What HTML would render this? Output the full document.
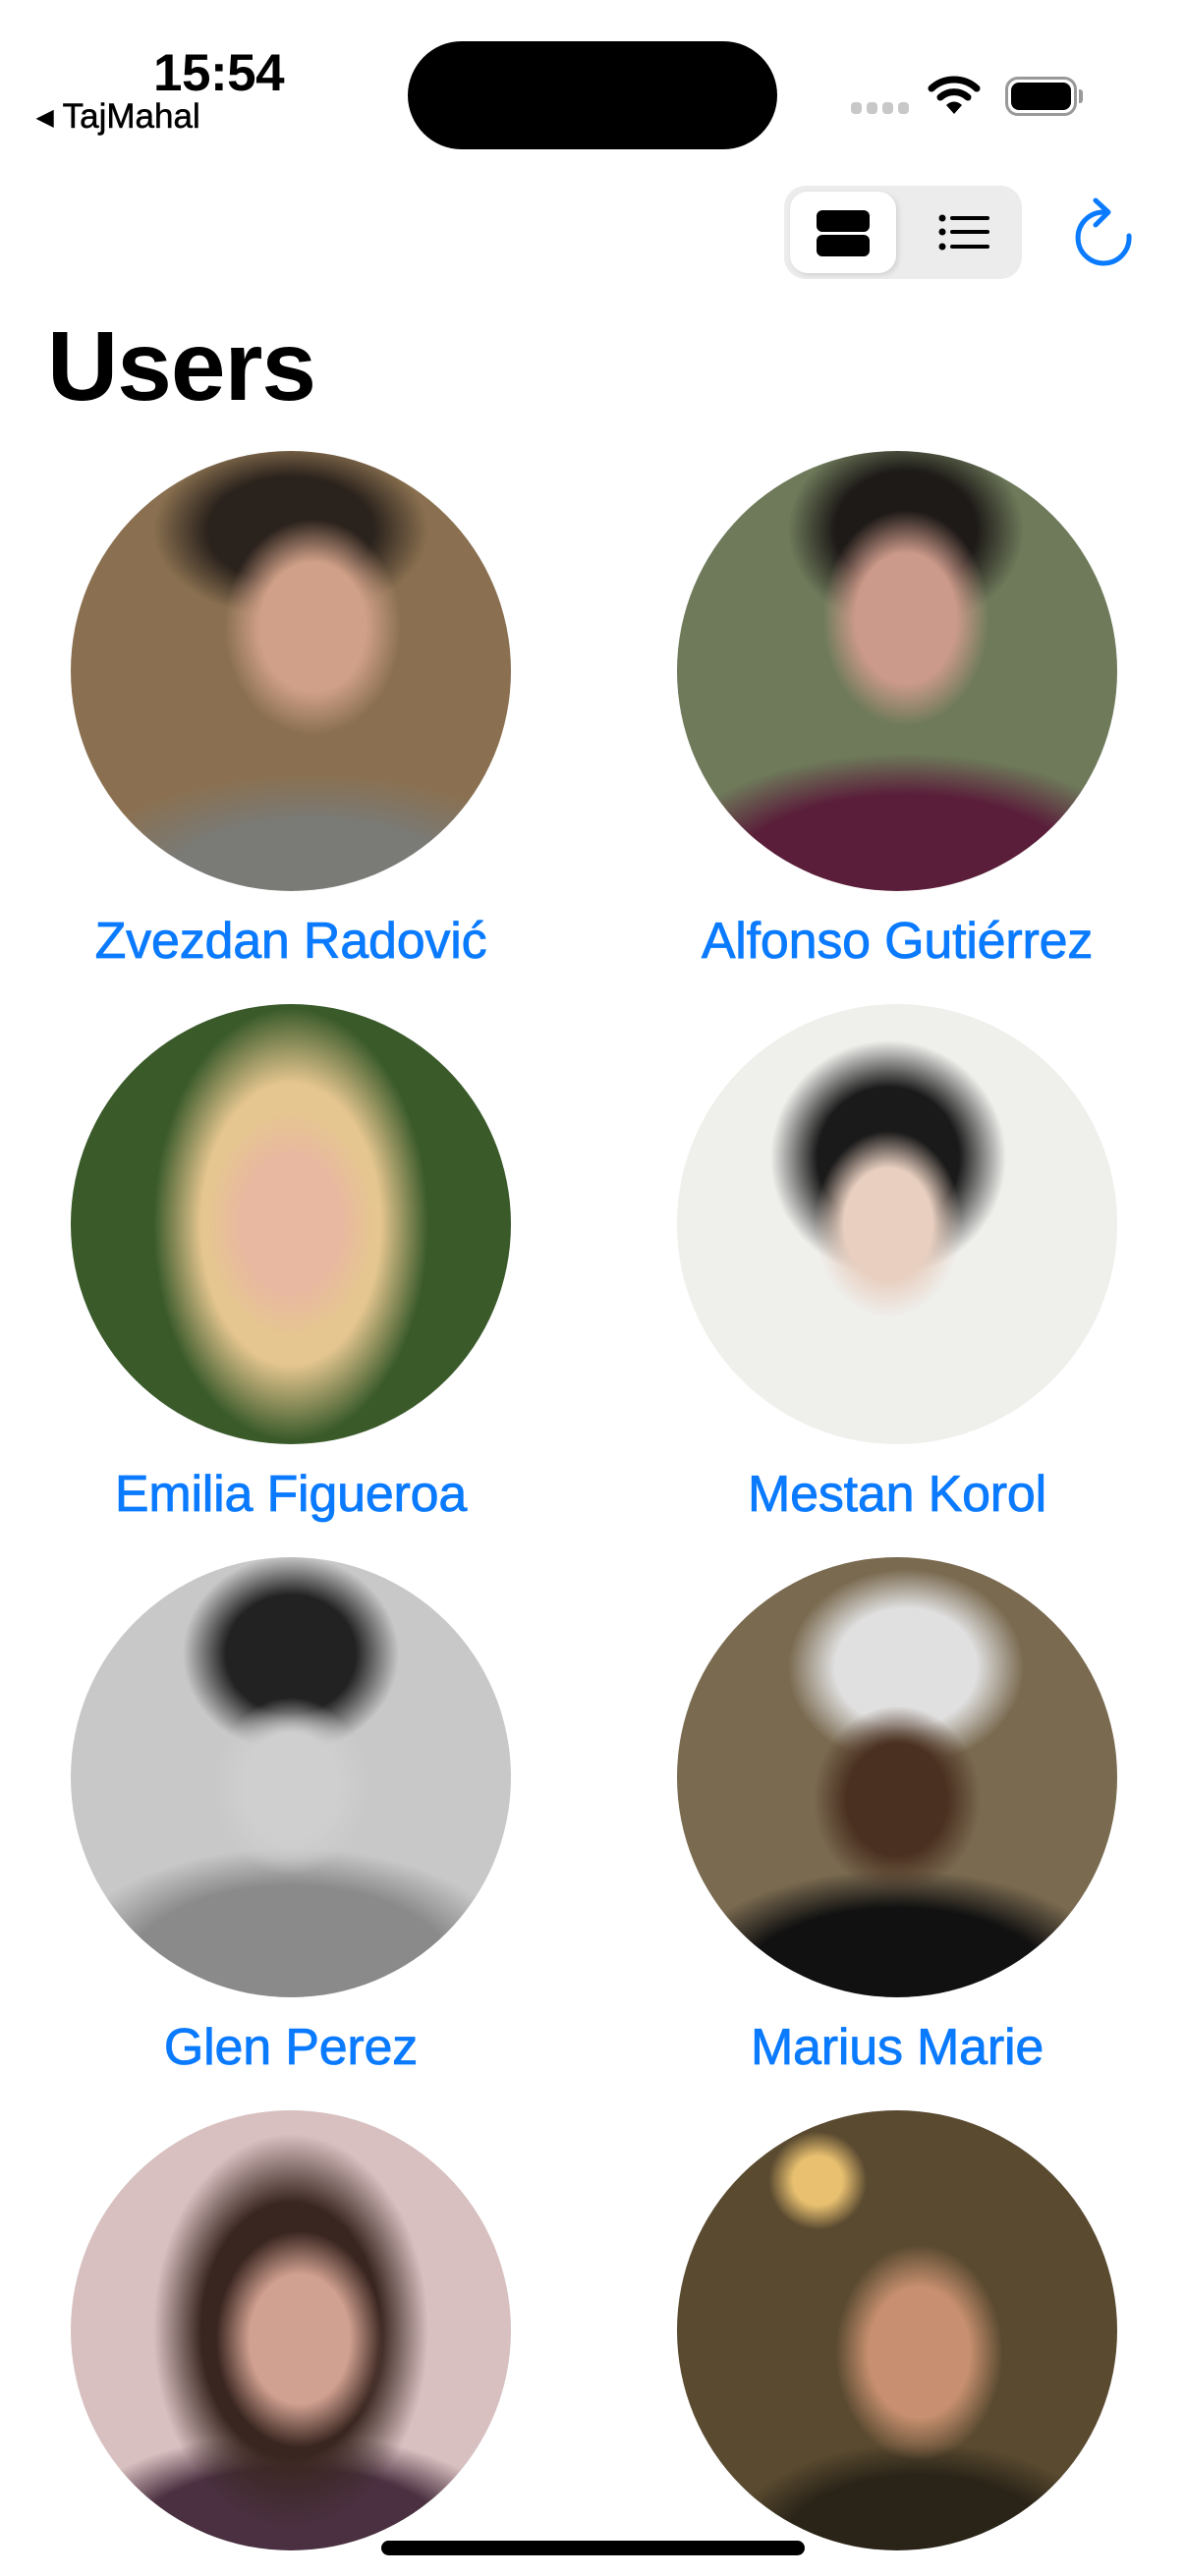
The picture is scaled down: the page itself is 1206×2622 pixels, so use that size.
<!DOCTYPE html>
<html><head><meta charset="utf-8"><style>
*{margin:0;padding:0;box-sizing:border-box}
body{width:1206px;height:2622px;background:#fff;position:relative;overflow:hidden;font-family:"Liberation Sans",sans-serif}
.abs{position:absolute}
.av{position:absolute;width:448px;height:448px;border-radius:50%;overflow:hidden}
.nm{position:absolute;width:600px;text-align:center;color:#0a7aff;font-size:52px;line-height:60px;font-weight:500;letter-spacing:-0.2px;-webkit-text-stroke:0.8px #0a7aff}
</style></head><body>
<div class="abs" style="left:156px;top:44px;font-size:53px;font-weight:bold;color:#000;letter-spacing:-0.5px">15:54</div>
<div class="abs" style="left:37px;top:99px;font-size:35px;color:#000;-webkit-text-stroke:0.5px #000">◂ TajMahal</div>
<div class="abs" style="left:415px;top:42px;width:376px;height:110px;border-radius:55px;background:#000"></div>
<div class="abs" style="left:866px;top:104px;width:58px;height:12px;">
 <span class="abs" style="left:0;width:11px;height:12px;border-radius:4px;background:#c8c8c8"></span>
 <span class="abs" style="left:16px;width:11px;height:12px;border-radius:4px;background:#c8c8c8"></span>
 <span class="abs" style="left:32px;width:11px;height:12px;border-radius:4px;background:#c8c8c8"></span>
 <span class="abs" style="left:48px;width:11px;height:12px;border-radius:4px;background:#c8c8c8"></span>
</div>
<svg class="abs" style="left:944px;top:76px" width="54" height="42" viewBox="0 0 54 42">
<path d="M4 14 A34 34 0 0 1 50 14" stroke="#000" stroke-width="7" fill="none" stroke-linecap="round"/>
<path d="M13 23 A21 21 0 0 1 41 23" stroke="#000" stroke-width="7" fill="none" stroke-linecap="round"/>
<path d="M27 40 L19 31 A11 11 0 0 1 35 31 Z" fill="#000"/>
</svg>
<div class="abs" style="left:1023px;top:78px;width:73px;height:40px;border:3px solid #999;border-radius:13px"></div>
<div class="abs" style="left:1029px;top:84px;width:61px;height:28px;background:#000;border-radius:8px"></div>
<div class="abs" style="left:1098px;top:91px;width:4px;height:14px;background:#999;border-radius:0 3px 3px 0"></div>
<div class="abs" style="left:798px;top:189px;width:242px;height:95px;border-radius:22px;background:#ececec"></div>
<div class="abs" style="left:804px;top:195px;width:108px;height:83px;border-radius:18px;background:#fff;box-shadow:2px 2px 6px rgba(0,0,0,0.12)"></div>
<div class="abs" style="left:831px;top:214px;width:54px;height:22px;border-radius:6px;background:#000"></div>
<div class="abs" style="left:831px;top:239px;width:54px;height:22px;border-radius:6px;background:#000"></div>
<svg class="abs" style="left:950px;top:212px" width="62" height="50" viewBox="0 0 62 50">
<circle cx="9" cy="10" r="3.5" fill="#000"/><circle cx="9" cy="24" r="3.5" fill="#000"/><circle cx="9" cy="39" r="3.5" fill="#000"/>
<path d="M19 10H55M19 24H55M19 39H55" stroke="#000" stroke-width="4" stroke-linecap="round"/>
</svg>
<svg class="abs" style="left:1090px;top:200px" width="70" height="72" viewBox="0 0 70 72">
<path d="M32 16 A26 26 0 1 0 59 40" stroke="#0a7aff" stroke-width="5" fill="none" stroke-linecap="round"/>
<path d="M25 4 L38 16 L25 29" stroke="#0a7aff" stroke-width="5" fill="none" stroke-linecap="round" stroke-linejoin="round"/>
</svg>
<div class="abs" style="left:48px;top:316px;font-size:100px;font-weight:bold;color:#000;letter-spacing:-1px">Users</div>

<div class="av" style="left:72px;top:459px;background:
radial-gradient(ellipse 90px 110px at 55% 40%,#d0a088 60%,transparent 100%),
radial-gradient(ellipse 140px 90px at 50% 18%,#2a221c 60%,transparent 100%),
radial-gradient(ellipse 260px 120px at 55% 100%,#7a7a76 60%,transparent 100%),
#8a7050"></div>
<div class="av" style="left:689px;top:459px;background:
radial-gradient(ellipse 85px 110px at 52% 38%,#cc9a8a 60%,transparent 100%),
radial-gradient(ellipse 120px 100px at 52% 18%,#1e1a18 60%,transparent 100%),
radial-gradient(ellipse 270px 140px at 52% 100%,#5a1e3a 70%,transparent 100%),
#6e7a5a"></div>
<div class="nm" style="left:-4px;top:928px">Zvezdan Radović</div>
<div class="nm" style="left:613px;top:928px">Alfonso Gutiérrez</div>

<div class="av" style="left:72px;top:1022px;background:
radial-gradient(ellipse 85px 115px at 50% 50%,#e8b8a0 60%,transparent 100%),
radial-gradient(ellipse 140px 220px at 50% 50%,#e6c690 65%,transparent 100%),
#3a5a2a"></div>
<div class="av" style="left:689px;top:1022px;background:
radial-gradient(ellipse 75px 95px at 48% 50%,#e8cfc0 60%,transparent 100%),
radial-gradient(ellipse 120px 120px at 48% 35%,#1a1a1a 60%,transparent 100%),
#efefec"></div>
<div class="nm" style="left:-4px;top:1491px">Emilia Figueroa</div>
<div class="nm" style="left:613px;top:1491px">Mestan Korol</div>

<div class="av" style="left:72px;top:1585px;background:
radial-gradient(ellipse 80px 90px at 50% 52%,#cfcfcf 60%,transparent 100%),
radial-gradient(ellipse 110px 100px at 50% 22%,#222 60%,transparent 100%),
radial-gradient(ellipse 240px 130px at 50% 95%,#8a8a8a 70%,transparent 100%),
#c8c8c8"></div>
<div class="av" style="left:689px;top:1585px;background:
radial-gradient(ellipse 85px 95px at 50% 55%,#4a3020 60%,transparent 100%),
radial-gradient(ellipse 120px 100px at 52% 25%,#e0e0e0 60%,transparent 100%),
radial-gradient(ellipse 240px 130px at 50% 100%,#111 70%,transparent 100%),
#7a6a50"></div>
<div class="nm" style="left:-4px;top:2054px">Glen Perez</div>
<div class="nm" style="left:613px;top:2054px">Marius Marie</div>

<div class="av" style="left:72px;top:2148px;background:
radial-gradient(ellipse 85px 110px at 52% 52%,#d0a090 60%,transparent 100%),
radial-gradient(ellipse 140px 200px at 50% 50%,#3a2620 65%,transparent 100%),
radial-gradient(ellipse 240px 120px at 50% 100%,#4a3040 70%,transparent 100%),
#d8c0c0"></div>
<div class="av" style="left:689px;top:2148px;background:
radial-gradient(ellipse 85px 110px at 55% 55%,#c89070 60%,transparent 100%),
radial-gradient(ellipse 200px 110px at 55% 100%,#2a2418 70%,transparent 100%),
radial-gradient(circle 50px at 32% 16%,#e8c070 50%,transparent 100%),
#5a4a30"></div>

<div class="abs" style="left:388px;top:2586px;width:431px;height:15px;border-radius:8px;background:#000"></div>
</body></html>
